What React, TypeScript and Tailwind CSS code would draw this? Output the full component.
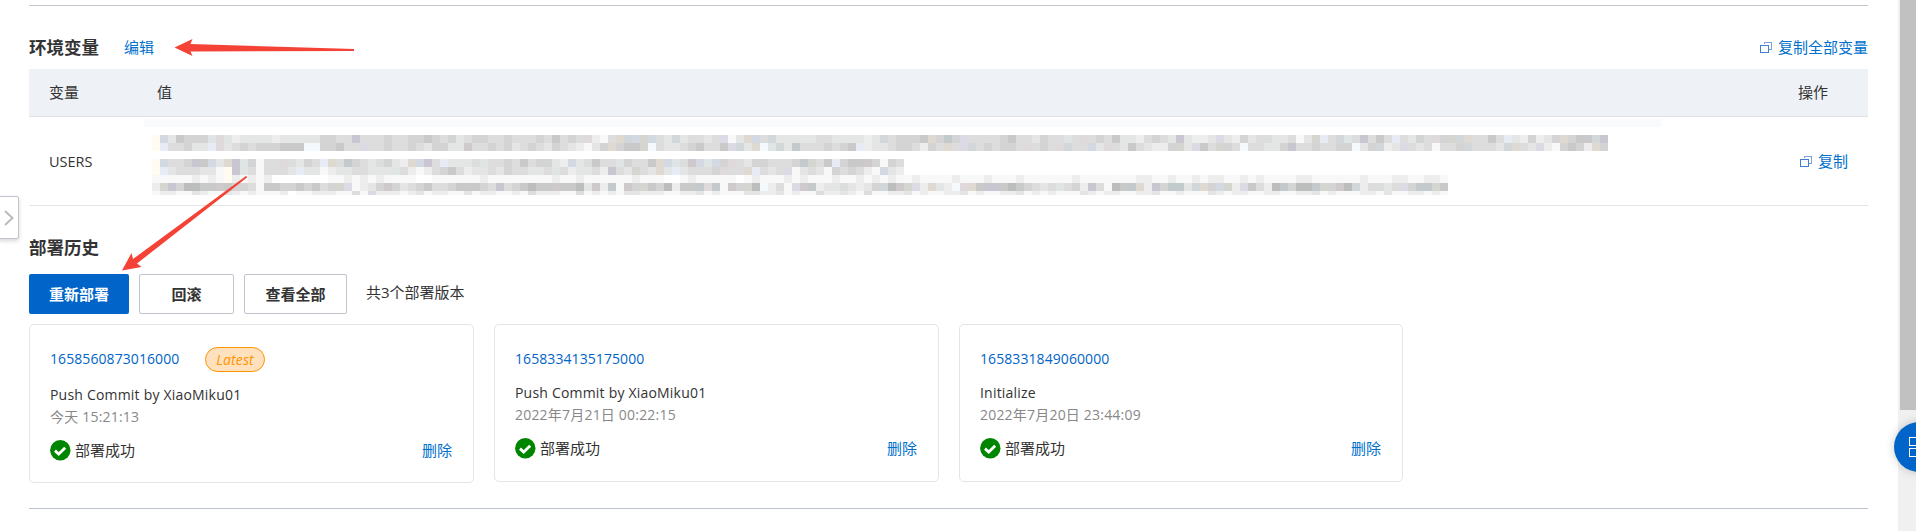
import React from "react";

const palette: Record<string, string> = {
  z: "#bcbdbd",
  a: "#c9c9c9",
  b: "#d4d4d4",
  c: "#dcdddc",
  d: "#e4e5e5",
  e: "#ededed",
  f: "#f8f8f8",
  P: "#c9c6d2",
  p: "#dcdae4",
  m: "#dfd9dc",
  M: "#cfc8cd",
  g: "#d4d6cf",
  G: "#c3cacb",
  t: "#dfe4e5",
  T: "#d2d8da",
  y: "#fffbf1",
  u: "#e6ebf5",
  B: "#d3d9e3",
  w: "#f4f9fe",
  o: "#e0d9d2",
};

const CELL = 8;

const mosaic: { y: number; h: number; count: number; cells: string }[] = [
  {
    y: 0,
    h: 8,
    count: 182,
    cells:
      "yBdabbbtmteddddedddddbbccPcccbccbbabcbdcbbccbcccbcacbcmefcoTBgBcdTdccdcpfdoBcTdddddccddddedTcbbbaobGbpccccbaccdbcctcmcbcaddecbcdPdeedpdebdccddcfdgucTtcPcacucdbcmbgToccacudebedbobaaTPgbbd",
    },
  {
    y: 8,
    h: 8,
    count: 182,
    cells:
      "yuccbddumdcbcbbbaaawwbbaccpccbccbcdbbddMccbcbdcbcdbcdefdbobaagwcddcbaccapTdowtTdGcccbcbaueddcbbcebcocpTcbcbbcmcbcmTccBdmcdacdeebgdpacgbcwccddbPccbccbbwdbTedpcdcfccbTcccdTocdpefbabeobcdbcddacef",
  },
  {
    y: 24,
    h: 8,
    count: 94,
    cells:
      "yBccbPaBdoPtbfccmcdbcuocGbcdcbdeoBPcudddctccbcacbbdeBdcacctbccaoBtcMBtBbmcdbbcccbGgcaubaaMbfbczb",
  },
  {
    y: 32,
    h: 8,
    count: 94,
    cells:
      "yudcccddfyPtcfcccduddfeddccdddtcefecbaceddcdbccddctceddcePcdgcdodudcccbmccoucdcpfdcdfbcbcefBdee",
  },
  {
    y: 40,
    h: 8,
    count: 162,
    cells:
      "fffffefefyefefe.......ffefefeffff..ffffffeffffffffeffeffffffefff..fefffff.fefffefefffeffefefeffeffffefffefffeffffffefffffffeeffeffefeeffefeffffeeffffffefffeeffeeffefff",
  },
  {
    y: 48,
    h: 8,
    count: 162,
    cells:
      "egPbzzaaMabbcfaabbabacbgpfedbMbdcbaccbaaabcPcbazaaMaazdMeGfMbgabzeaaGmGfMbgzwecfpMGeddcdedbTzMgpeodewmoaPPazabcdctcbePcfzaGoePbGGdTobBgepacezGbzzGgbMzTeccdcpbGGgaoPcaactttt",
  },
  {
    y: 56,
    h: 4,
    count: 162,
    cells:
      "feeffdeffdefefffe.ffeeeffcfpeeefedfeeffdfeeffefceeeffcfefefddeeeffeedfefffddeedfeffceedefcffeedfeffeedfeffeedfefefffdefeeffeedffefffdefeeffeeffeedfefffeefdffeefefeeffeddee",
  },
];

function Redacted() {
  return (
    <svg
      className="block"
      width="1520"
      height="76"
      viewBox="0 0 1520 76"
      shapeRendering="crispEdges"
      aria-hidden="true"
    >
      <rect x="0" y="0" width="1517" height="8" fill="#f8fafc" />
      {mosaic.map((row, r) =>
        row.cells
          .slice(0, row.count)
          .padEnd(row.count, row.cells.slice(12, 60))
          .split("")
          .map((k, i) =>
            k === "." ? null : (
              <rect
                key={`${r}-${i}`}
                x={8 + i * CELL}
                y={16 + row.y}
                width={CELL}
                height={row.h}
                fill={palette[k]}
              />
            ),
          ),
      )}
    </svg>
  );
}

function CopyIcon() {
  return (
    <svg
      className="h-[13px] w-[13px] shrink-0"
      viewBox="0 0 13 13"
      fill="none"
      shapeRendering="crispEdges"
    >
      <path d="M4.5 3V1.500H11.500V8.500H9" stroke="#7f9fd8" />
      <path d="M0.500 4.500h8v7h-8z" stroke="#3f7fd0" />
    </svg>
  );
}

function CheckIcon() {
  return (
    <svg className="h-[21px] w-[21px] shrink-0" viewBox="0 0 21 21" fill="none">
      <circle cx="10.3" cy="10.3" r="10.2" fill="#008500" />
      <path
        d="M5 10.600l3.700 3.400 6.500-6.300"
        stroke="#fff"
        strokeWidth="2.800"
      />
    </svg>
  );
}

type Deployment = {
  id: string;
  title: string;
  time: string;
  latest?: boolean;
};

const deployments: Deployment[] = [
  {
    id: "1658560873016000",
    title: "Push Commit by XiaoMiku01",
    time: "今天 15:21:13",
    latest: true,
  },
  {
    id: "1658334135175000",
    title: "Push Commit by XiaoMiku01",
    time: "2022年7月21日 00:22:15",
  },
  { id: "1658331849060000", title: "Initialize", time: "2022年7月20日 23:44:09" },
];

function Card({ d }: { d: Deployment }) {
  return (
    <article
      className={
        d.latest
          ? "h-[159px] w-[445px] rounded-[5px] border border-[#e3e4e6] pl-5 pr-[21px] pt-[22px]"
          : "h-[158px] w-[445px] rounded-[5px] border border-[#e3e4e6] pl-5 pr-[21px] pt-[22px] last:w-[444px]"
      }
    >
      <div className={d.latest ? "flex h-[26px] items-start" : "flex h-6 items-start"}>
        <a className="w-[155px] text-[14px] leading-[23px] tracking-[0.08px] text-[#0064c8]">
          {d.id}
        </a>
        {d.latest && (
          <span className="flex h-[25px] w-[60px] items-center justify-center rounded-full border border-[#ff9300] bg-[#ffe1bd] text-[14px] italic leading-none tracking-[0.1px] text-[#ff9300]">
            Latest
          </span>
        )}
      </div>
      <p className="mt-[10px] h-[22px] text-[14px] leading-[23px] tracking-[0.2px] text-[#333]">
        {d.title}
      </p>
      <p className="h-[22px] text-[14px] leading-[24px] tracking-[0.2px] text-[#888]">{d.time}</p>
      <div className="mt-3 flex h-[22px] items-center">
        <CheckIcon />
        <span className="ml-1 text-[15px] text-[#333]">部署成功</span>
        <a className="ml-auto text-[15px] text-[#0070cc]">删除</a>
      </div>
    </article>
  );
}

export default function App() {
  return (
    <div className="relative flex h-[531px] w-[1916px] overflow-hidden bg-white font-['Open_Sans','Noto_Sans_CJK_SC',sans-serif] text-[15px] text-[#333]">
      <main className="ml-[29px] w-[1839px] pt-[5px]">
        <div className="h-px bg-[#c3c5cc]" />

        <section>
          <header className="flex h-[63px] items-center pt-[20px]">
            <h2 className="mb-[2px] text-[17.5px] font-bold leading-6">环境变量</h2>
            <a className="ml-[25px] text-[#0070cc]">编辑</a>
            <a className="ml-auto flex items-center gap-[5px] text-[#0070cc]">
              <CopyIcon />
              复制全部变量
            </a>
          </header>
          <div className="flex h-12 items-center border-b border-[#dee0e3] bg-[#eef1f6] px-5">
            <span className="w-[108px]">变量</span>
            <span>值</span>
            <span className="ml-auto mr-5">操作</span>
          </div>
          <div className="flex h-[89px] border-b border-[#e3e4e6] pr-5">
            <span className="w-[115px] self-center pl-5 pt-[2px] text-[14.5px]">USERS</span>
            <div className="pt-[2px]">
              <Redacted />
            </div>
            <a className="ml-auto flex items-center gap-[5px] text-[#0070cc]">
              <CopyIcon />
              复制
            </a>
          </div>
        </section>

        <section>
          <h2 className="pt-[29px] text-[17.5px] font-bold leading-6">部署历史</h2>
          <div className="mt-[15px] flex h-10 gap-[10px] font-bold">
            <button className="h-10 w-[100px] rounded-[2px] bg-[#0064c8] text-white">
              重新部署
            </button>
            <button className="h-10 w-[95px] rounded-[2px] border border-[#c0c4cc]">
              回滚
            </button>
            <button className="h-10 w-[103px] rounded-[2px] border border-[#c0c4cc]">
              查看全部
            </button>
            <span className="ml-[9px] font-normal leading-9">共3个部署版本</span>
          </div>
          <div className="mt-[10px] flex items-start gap-5">
            {deployments.map((d) => (
              <Card key={d.id} d={d} />
            ))}
          </div>
        </section>

        <div className="mt-[25px] h-px bg-[#bcc3cc]" />
      </main>

      <div className="ml-auto h-full w-[18px] bg-[#f0f0f0] pl-[2px]">
        <div className="h-[410px] w-4 bg-[#c1c1c1]" />
      </div>

      <button className="absolute left-[-2px] top-[196px] flex h-[43px] w-[21px] items-center justify-center rounded-[2px] border border-[#c0c4cc] bg-white shadow-[0_2px_4px_rgba(0,0,0,0.16)]">
        <svg
          className="h-4 w-[10px]"
          viewBox="0 0 10 16"
          fill="none"
          stroke="#b9b9bd"
          strokeWidth="1.900"
        >
          <path d="M1 1l7.500 7L1 15" />
        </svg>
      </button>

      <button className="absolute left-[1894px] top-[422px] h-[50px] w-[50px] rounded-full bg-[#0064c8] shadow-[0_0_10px_rgba(0,0,0,0.2)]">
        <svg
          className="absolute left-[15px] top-[15px] h-5 w-5"
          viewBox="0 0 20 20"
          fill="none"
          stroke="#fff"
          shapeRendering="crispEdges"
        >
          <path d="M0.500 0.500h8v8h-8zM0.500 11.500h8v8h-8zM11.500 0.500h8v8h-8zM11.500 11.500h8v8h-8z" />
        </svg>
      </button>

      <svg
        className="pointer-events-none absolute left-0 top-0"
        width="400"
        height="300"
        viewBox="0 0 400 300"
        fill="#f44336"
      >
        <path d="M174.500 47.500L192.500 39L190.500 44L354 49V51L190.500 51.500L192.500 56Z" />
        <path d="M122 270.500L131.500 253L133 259L246 176L247.300 177.300L137 263.500L141.500 267Z" />
      </svg>
    </div>
  );
}
